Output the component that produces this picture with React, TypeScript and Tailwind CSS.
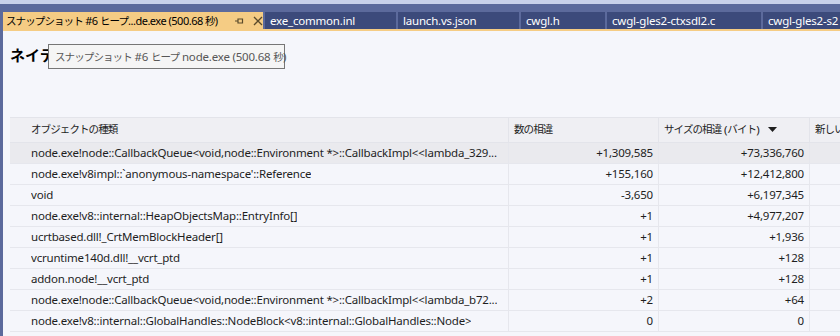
import React from "react";

const font = { fontFamily: '"Noto Sans", "Noto Sans CJK JP", sans-serif' };

const J = ({ children }: { children: React.ReactNode }) => (
  <span className="text-[10.5px] tracking-[-0.9px]">{children}</span>
);

const rows: [string, string, string][] = [
  ["node.exe!node::CallbackQueue<void,node::Environment *>::CallbackImpl<<lambda_329...", "+1,309,585", "+73,336,760"],
  ["node.exe!v8impl::`anonymous-namespace'::Reference", "+155,160", "+12,412,800"],
  ["void", "-3,650", "+6,197,345"],
  ["node.exe!v8::internal::HeapObjectsMap::EntryInfo[]", "+1", "+4,977,207"],
  ["ucrtbased.dll!_CrtMemBlockHeader[]", "+1", "+1,936"],
  ["vcruntime140d.dll!__vcrt_ptd", "+1", "+128"],
  ["addon.node!__vcrt_ptd", "+1", "+128"],
  ["node.exe!node::CallbackQueue<void,node::Environment *>::CallbackImpl<<lambda_b72...", "+2", "+64"],
  ["node.exe!v8::internal::GlobalHandles::NodeBlock<v8::internal::GlobalHandles::Node>", "0", "0"],
];

const tabs = [
  { label: "exe_common.inl", w: "w-[131px]" },
  { label: "launch.vs.json", w: "w-[121px]" },
  { label: "cwgl.h", w: "w-[84px]" },
  { label: "cwgl-gles2-ctxsdl2.c", w: "w-[154px]" },
  { label: "cwgl-gles2-s2", w: "w-[90px]" },
];

export default function App() {
  return (
    <div className="w-[840px] h-[336px] overflow-hidden flex flex-col bg-[#5c6a9c] text-[11.5px] tracking-[-0.2px] text-[#1e1e1e]" style={font}>
      <div className="h-[4px] bg-[#c9d1ea] shrink-0" />
      <div className="h-[8px] shrink-0" />
      <div className="h-[17px] flex pl-[3px] shrink-0 gap-[2px]">
        <div className="w-[260px] shrink-0 bg-[#f5cc84] flex items-center pl-[3px] text-black whitespace-nowrap">
          <span className="leading-[17px] w-[222px] shrink-0 text-[11px] tracking-[-0.5px]">
            <J>スナップショット</J> #6 <J>ヒープ</J>...de.exe (500.68 <J>秒</J>)
          </span>
          <svg width="10" height="10" viewBox="0 0 10 10" className="ml-[6px] shrink-0" fill="none" stroke="#5a4a2a" strokeWidth="1.2">
            <path d="M1 5h3M4 2.5v5M4 3h4.5v4H4" />
          </svg>
          <svg width="10" height="10" viewBox="0 0 10 10" className="ml-[9px] shrink-0" fill="none" stroke="#5a4a2a" strokeWidth="1.3">
            <path d="M1 1l8 8M9 1l-8 8" />
          </svg>
        </div>
        {tabs.map((t) => (
          <div key={t.label} className={`${t.w} shrink-0 bg-[#3c4a7b] text-white flex items-center pl-[5px] whitespace-nowrap overflow-hidden`}>
            <span className="leading-[17px]">{t.label}</span>
          </div>
        ))}
      </div>
      <div className="h-[2px] ml-[3px] bg-[#f5cc84] shrink-0" />
      <div className="ml-[3px] flex-1 bg-[#f5f6fb] relative flex flex-col">
        <div className="h-[86px] shrink-0 pl-[7px] pt-[14px]">
          <div className="text-[15px] font-bold leading-[20px] text-black tracking-normal">ネイティブ型</div>
        </div>
        <div className="absolute left-[45px] top-[13px] w-[237px] h-[25px] border border-[#767676] bg-[#f5f5f5] text-[#575757] flex items-center pl-[6px] whitespace-nowrap">
          <span>
            <J>スナップショット</J> #6 <J>ヒープ</J> node.exe (500.68 <J>秒</J>)
          </span>
        </div>
        <div className="ml-[7px] flex flex-col">
          <div className="h-[26px] flex bg-[#efeff3] border-t border-[#e3e4ea] border-b">
            <div className="w-[499px] shrink-0 pl-[21px] flex items-center border-r border-[#e3e4ea]"><J>オブジェクトの種類</J></div>
            <div className="w-[150px] shrink-0 pl-[5px] flex items-center border-r border-[#e3e4ea]"><J>数の相違</J></div>
            <div className="w-[151px] shrink-0 pl-[5px] flex items-center border-r border-[#e3e4ea] whitespace-nowrap">
              <J>サイズの相違</J>&nbsp;(<J>バイト</J>)
              <svg width="9" height="6" viewBox="0 0 9 6" className="ml-[9px]"><path d="M0 0h9L4.5 5z" fill="#1e1e1e" /></svg>
            </div>
            <div className="flex-1 pl-[5px] flex items-center whitespace-nowrap"><J>新しいインスタンス</J></div>
          </div>
          {rows.map((r, i) => (
            <div key={i} className={`h-[21px] flex border-b border-[#e6e7ed] ${i === 0 ? "bg-[#eaeaee]" : ""}`}>
              <div className="w-[499px] shrink-0 pl-[21px] pr-[4px] flex items-center border-r border-[#e6e7ed] whitespace-nowrap overflow-hidden">
                <span className="overflow-hidden">{r[0]}</span>
              </div>
              <div className="w-[150px] shrink-0 pr-[5px] flex items-center justify-end border-r border-[#e6e7ed]">{r[1]}</div>
              <div className="w-[151px] shrink-0 pr-[5px] flex items-center justify-end border-r border-[#e6e7ed]">{r[2]}</div>
              <div className="flex-1" />
            </div>
          ))}
        </div>
      </div>
    </div>
  );
}
